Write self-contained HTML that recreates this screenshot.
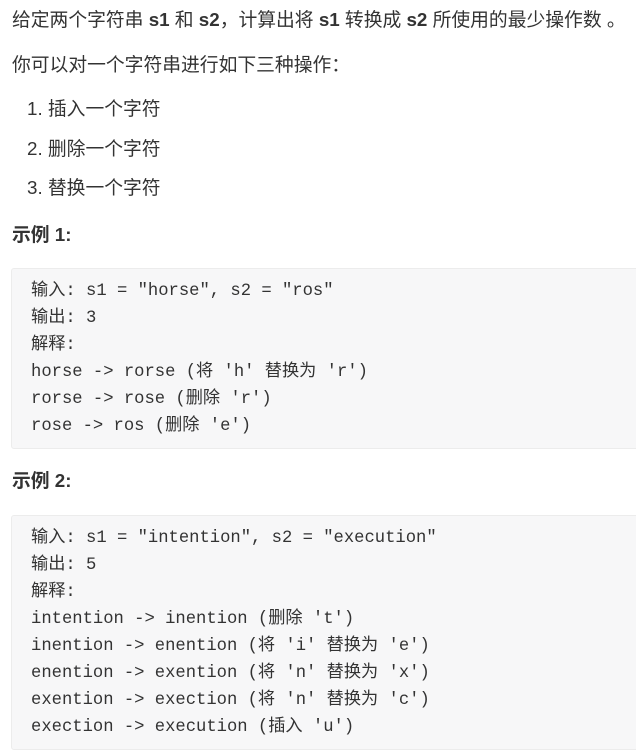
<!DOCTYPE html>
<html><head><meta charset="utf-8"><style>
body{margin:0;width:636px;height:752px;background:#fff;overflow:hidden;font-family:"Liberation Sans","Noto Sans CJK SC",sans-serif;color:#333;}
.t{position:absolute;left:12px;font-size:18.8px;white-space:nowrap;line-height:24px}
b{font-weight:bold}
.pre{position:absolute;left:11px;width:640px;background:#f7f7f8;border:1px solid #ececec;border-radius:3px;box-sizing:border-box;}
.pre div{position:absolute;left:19px;font-family:"Liberation Mono","Noto Sans CJK SC",monospace;font-size:17.2px;white-space:pre;color:#333;line-height:20px}
</style></head><body>
<div class="t" style="top:8px">给定两个字符串 <b>s1</b> 和 <b>s2</b>，计算出将 <b>s1</b> 转换成 <b>s2</b> 所使用的最少操作数 。</div>
<div class="t" style="top:53px">你可以对一个字符串进行如下三种操作：</div>
<div class="t" style="top:97px;left:27px">1. 插入一个字符</div>
<div class="t" style="top:137px;left:27px">2. 删除一个字符</div>
<div class="t" style="top:176px;left:27px">3. 替换一个字符</div>
<div class="t" style="top:223px"><b>示例 1:</b></div>
<div class="pre" style="top:268px;height:181px">
<div style="top:13px">输入: s1 = "horse", s2 = "ros"</div>
<div style="top:40px">输出: 3</div>
<div style="top:67px">解释:</div>
<div style="top:94px">horse -> rorse (将 'h' 替换为 'r')</div>
<div style="top:121px">rorse -> rose (删除 'r')</div>
<div style="top:148px">rose -> ros (删除 'e')</div>
</div>
<div class="t" style="top:469px"><b>示例 2:</b></div>
<div class="pre" style="top:515px;height:235px">
<div style="top:13px">输入: s1 = "intention", s2 = "execution"</div>
<div style="top:40px">输出: 5</div>
<div style="top:67px">解释:</div>
<div style="top:94px">intention -> inention (删除 't')</div>
<div style="top:121px">inention -> enention (将 'i' 替换为 'e')</div>
<div style="top:148px">enention -> exention (将 'n' 替换为 'x')</div>
<div style="top:175px">exention -> exection (将 'n' 替换为 'c')</div>
<div style="top:202px">exection -> execution (插入 'u')</div>
</div>
</body></html>
